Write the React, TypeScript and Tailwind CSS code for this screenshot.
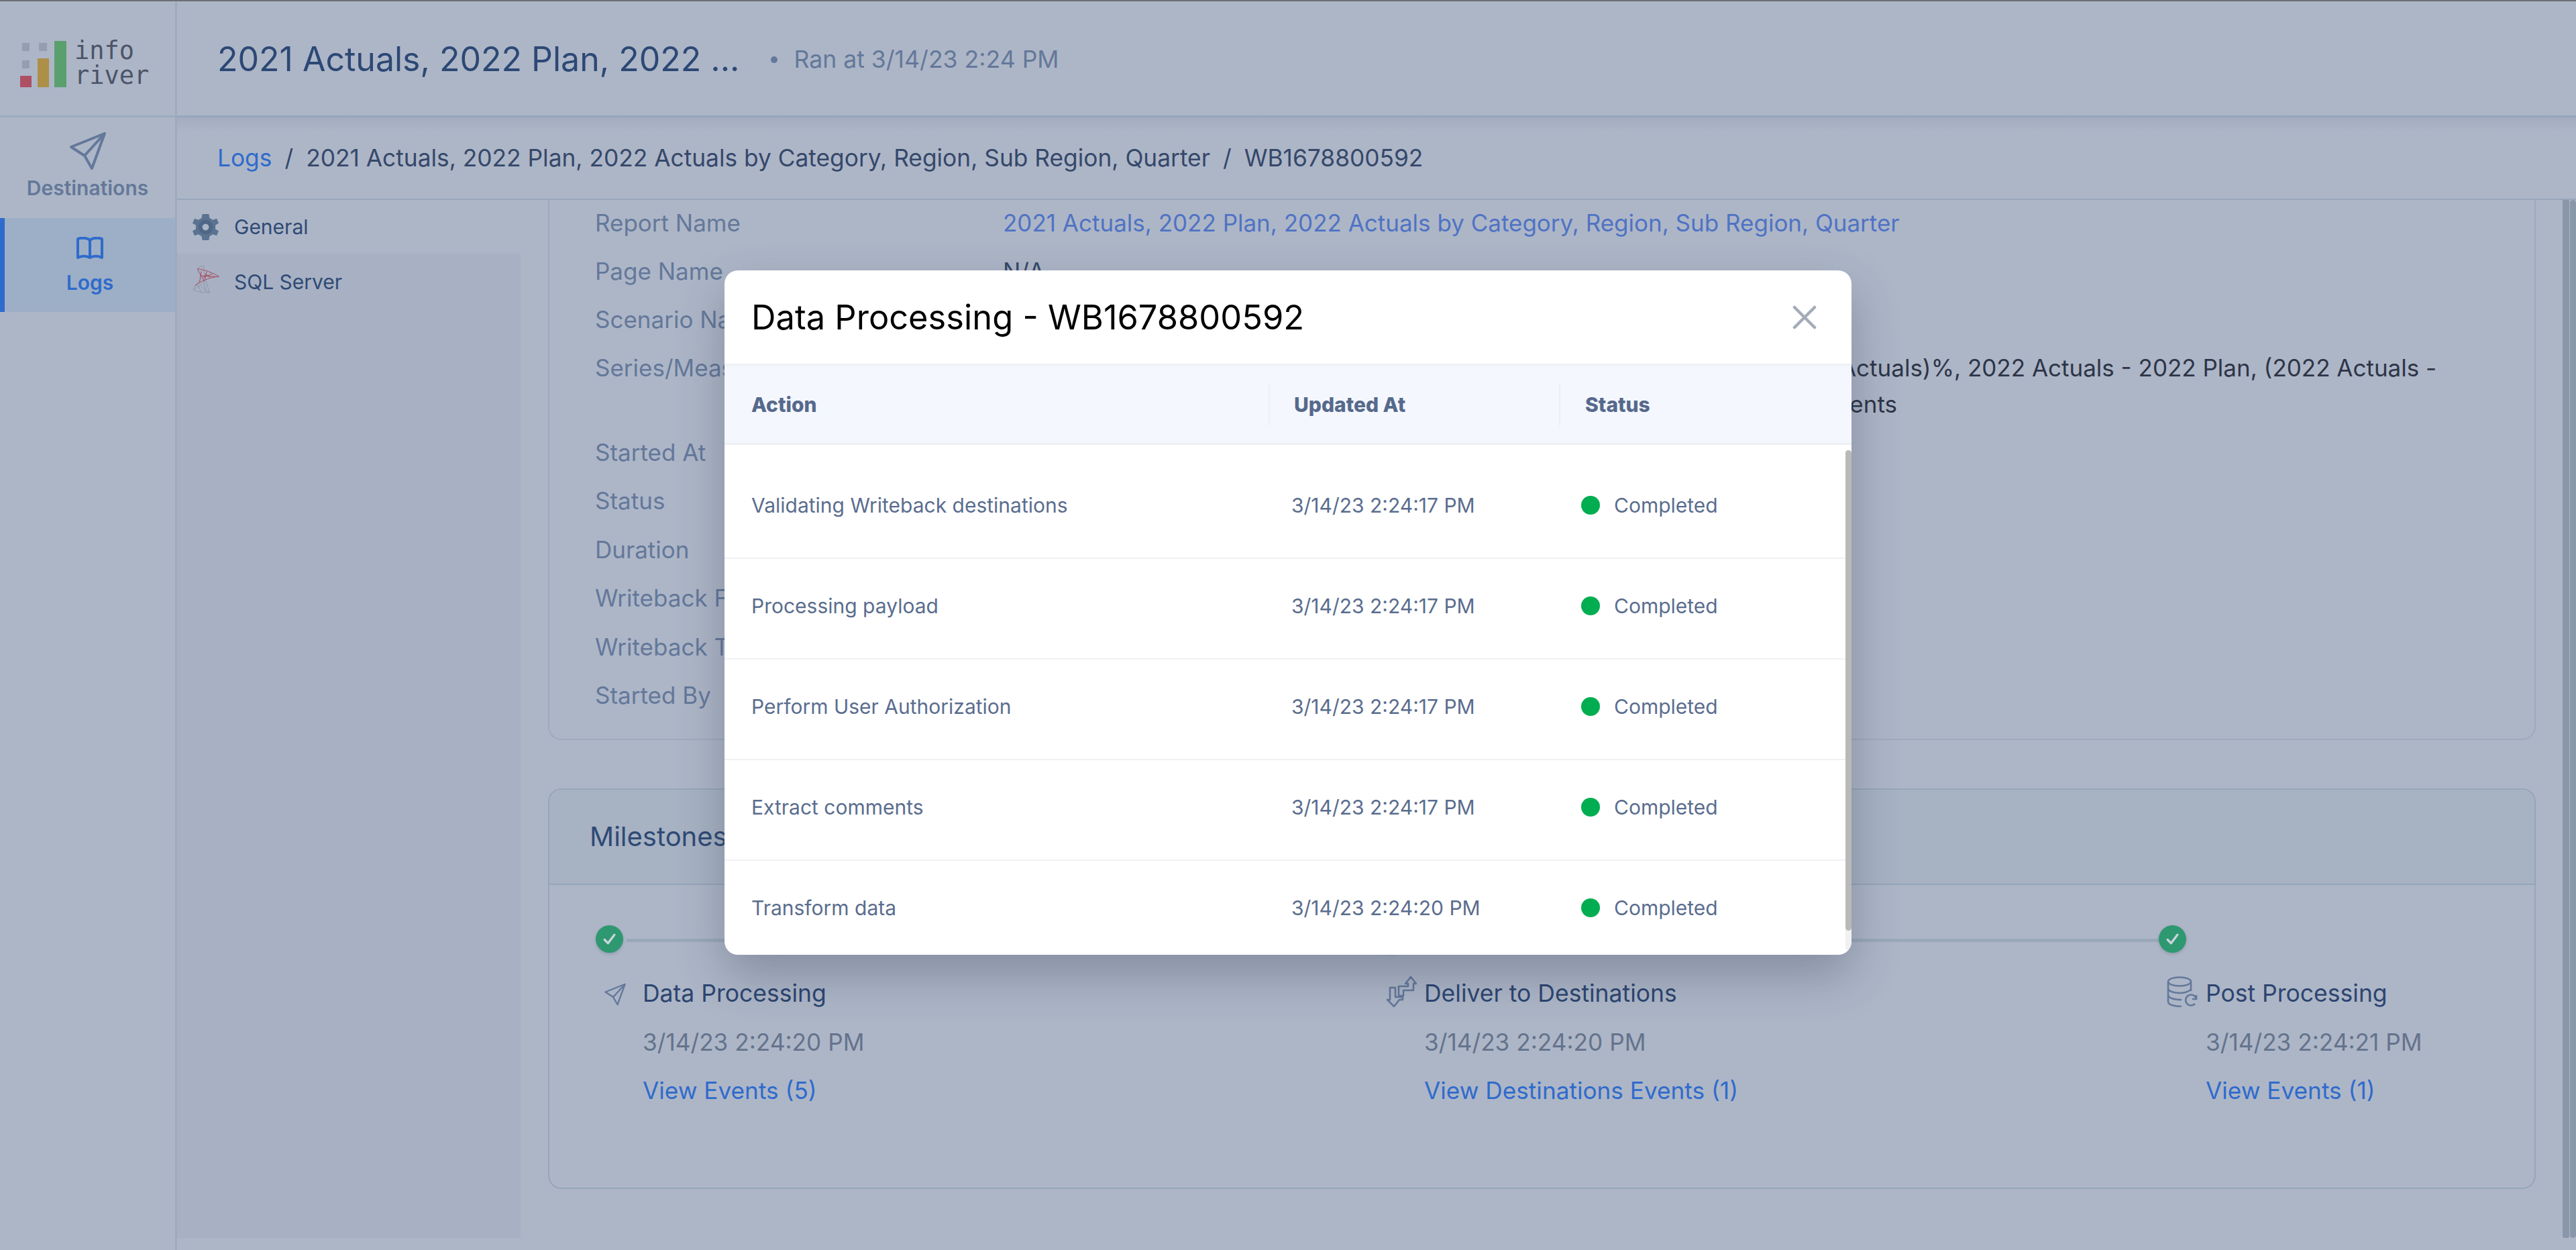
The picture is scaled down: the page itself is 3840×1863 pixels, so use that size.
import React from 'react';

const rows = [
  { action: 'Validating Writeback destinations', time: '3/14/23 2:24:17 PM' },
  { action: 'Processing payload', time: '3/14/23 2:24:17 PM' },
  { action: 'Perform User Authorization', time: '3/14/23 2:24:17 PM' },
  { action: 'Extract comments', time: '3/14/23 2:24:17 PM' },
  { action: 'Transform data', time: '3/14/23 2:24:20 PM' },
];

const detailsAfter = ['Started At', 'Status', 'Duration', 'Writeback From', 'Writeback To', 'Started By'];

const PlaneIcon = ({ className }: { className: string }) => (
  <svg viewBox="0 0 56 58" fill="none" stroke="currentColor" strokeWidth="4" strokeLinejoin="round" className={className}>
    <path d="M53 3 L3 23 L23 36 L34 55 Z" />
    <path d="M53 3 L23 36" />
  </svg>
);

const BookIcon = () => (
  <svg viewBox="0 0 42 34" fill="none" stroke="currentColor" strokeWidth="4" strokeLinejoin="round" className="w-[42px] h-[34px]">
    <path d="M21 5 C17 1 8 1 3 3 V31 C8 28 16 28 21 31 C26 28 34 28 39 31 V3 C34 1 25 1 21 5 Z" />
    <path d="M21 5 V31" />
  </svg>
);

const GearIcon = () => (
  <svg viewBox="0 0 40 40" className="w-[39px] h-[39px]">
    <path
      fill="#5a7391"
      d="M15 0 H25 L26 6 L31 9 L37 7 L40 14 L35 17 V23 L40 26 L37 33 L31 31 L26 34 L25 40 H15 L14 34 L9 31 L3 33 L0 26 L5 23 V17 L0 14 L3 7 L9 9 L14 6 Z"
    />
    <circle cx="20" cy="20" r="11" fill="#4f6786" />
    <circle cx="20" cy="20" r="5" fill="#adb6c7" />
  </svg>
);

const SqlIcon = () => (
  <svg viewBox="80 290 125 130" fill="none" className="w-[41px] h-[43px]">
    <g stroke="#8d93a0" strokeWidth="2.5">
      <path d="M130 292 C132 330 145 380 158 415 C130 415 100 412 83 402 C88 385 110 360 128 345" />
      <path d="M105 300 L130 292 M120 388 L158 415 M100 372 L120 412 M130 360 L140 413 M83 402 L125 375" />
    </g>
    <g stroke="#a9475c" strokeWidth="3">
      <path d="M102 306 C130 310 175 325 200 342 C160 345 120 360 90 385" />
      <path d="M102 306 C112 330 125 345 135 365 M120 318 L112 368 M145 320 L135 355 M170 330 L128 345 M115 338 L185 342 M135 330 L160 345" />
    </g>
  </svg>
);

const DeliverIcon = () => (
  <svg viewBox="0 0 46 46" fill="none" stroke="currentColor" strokeWidth="2.6" strokeLinejoin="round" className="w-[46px] h-[46px]">
    <path d="M37 1 L45 11 H41 V21 H26 V29 H19 V15 H33 V11 H29 Z" />
    <path d="M12 45 L2 35 H6 V17 H14 V31 H25 V35 H20 Z" />
  </svg>
);

const DatabaseIcon = () => (
  <svg viewBox="0 0 46 46" fill="none" stroke="currentColor" strokeWidth="2.6" className="w-[46px] h-[46px]">
    <ellipse cx="19" cy="8" rx="17" ry="6.5" />
    <path d="M2 8 V38 C2 42 10 45 22 45" />
    <path d="M36 8 V22" />
    <path d="M2 18 C2 22 10 25 19 25 C26 25 32 23 36 20" />
    <path d="M2 28 C2 32 10 35 22 35" />
    <path d="M44 34 A8 8 0 1 0 42 41" />
    <path d="M44 28 V34 H38" />
  </svg>
);

const CheckDot = () => (
  <div className="w-[41px] h-[41px] shrink-0 rounded-full bg-[#2e9870] shadow-[0_2px_4px_rgba(60,70,90,0.25)] flex items-center justify-center">
    <svg viewBox="0 0 20 20" fill="none" stroke="#c9d4da" strokeWidth="3.2" strokeLinecap="round" strokeLinejoin="round" className="w-[21px] h-[21px]">
      <path d="M3 11 L8 16 L17 4" />
    </svg>
  </div>
);

const Milestone = ({ icon, iconClass, title, date, link, line }: { icon: React.ReactNode; iconClass: string; title: string; date: string; link: string; line: boolean }) => (
  <div className={line ? 'w-[1165px] shrink-0' : 'flex-1'}>
    <div className="flex items-center h-[41px]">
      <CheckDot />
      {line && <div className="flex-1 h-[5px] bg-[#9ba8ba] ml-[5px] mt-[4px]" />}
    </div>
    <div className="relative pl-[70px] pt-[34px]">
      <div className={`absolute text-[#64789a] ${iconClass}`}>{icon}</div>
      <div className="h-[54px] leading-[54px] text-[35.5px] text-[#2c4570]">{title}</div>
      <div className="mt-[18px] h-[54px] leading-[54px] text-[#64738c]">{date}</div>
      <div className="mt-[18px] h-[54px] leading-[54px] text-[#2f6bcc]">{link}</div>
    </div>
  </div>
);

export default function App() {
  return (
    <div className="relative h-screen w-full overflow-hidden border-t-2 border-[#6b6e74] bg-[#adb6c7] font-[Inter,sans-serif] text-[35.2px] flex">
      <aside className="w-[264px] shrink-0 border-r-[3px] border-[#9dabbe] flex flex-col">
        <div className="h-[173px] border-b-[3px] border-[#9dabbe] relative shrink-0">
          <svg viewBox="0 0 70 70" className="absolute left-[30px] top-[59px] w-[70px] h-[70px]">
            <rect x="3" y="3" width="11" height="12" fill="#949eb0" />
            <rect x="28" y="3" width="12" height="12" fill="#949eb0" />
            <rect x="3" y="29" width="11" height="12" fill="#949eb0" />
            <rect x="0" y="52" width="17" height="17" fill="#ad5064" />
            <rect x="26" y="26" width="17" height="43" fill="#ad8f47" />
            <rect x="51" y="0" width="18" height="69" fill="#5aa06f" />
          </svg>
          <div className="absolute left-[111px] top-[55px] font-['DejaVu_Sans_Mono',monospace] text-[37px] leading-[37px] text-[#4b5568]">
            info
            <br />
            river
          </div>
        </div>
        <div className="h-[150px] flex flex-col items-center pt-[21px] text-[#64789a] shrink-0">
          <PlaneIcon className="w-[56px] h-[58px]" />
          <span className="text-[30px] font-semibold mt-[6px] leading-[40px]">Destinations</span>
        </div>
        <div className="h-[140px] border-l-[7px] border-[#2f6bcc] bg-[#9dafc6] flex flex-col items-center pt-[28px] text-[#2f6bcc] shrink-0">
          <BookIcon />
          <span className="text-[30px] font-semibold mt-[14px] leading-[40px]">Logs</span>
        </div>
      </aside>

      <main className="flex-1 min-w-0 flex flex-col">
        <header className="h-[173px] shrink-0 border-b-[3px] border-[#97a5ba] pl-[60px] pt-[3px] flex items-center">
          <span className="text-[50px] text-[#2c4875]">2021 Actuals, 2022 Plan, 2022 ...</span>
          <span className="ml-[47px] w-[10px] h-[10px] rounded-full bg-[#64789a]" />
          <span className="ml-[24px] text-[35.6px] text-[#64789a]">Ran at 3/14/23 2:24 PM</span>
        </header>
        <div className="h-[123px] shrink-0 border-b-2 border-[#97a5ba] pl-[60px] pt-[2px] flex items-center text-[35.3px] text-[#35486a] bg-gradient-to-b from-[#a3adbf] to-[#adb6c7] to-[18%]">
          <span className="text-[#2f6bcc]">Logs</span>
          <span className="mx-[19px]">/</span>
          <span>2021 Actuals, 2022 Plan, 2022 Actuals by Category, Region, Sub Region, Quarter</span>
          <span className="mx-[19px]">/</span>
          <span>WB1678800592</span>
        </div>

        <div className="flex-1 min-h-0 flex">
          <nav className="w-[512px] shrink-0 flex flex-col mb-[18px] text-[30px] text-[#2f4a75]">
            <div className="h-[80px] shrink-0 flex items-center pl-[23px] pt-[1px] gap-[23px]">
              <GearIcon />
              <span>General</span>
            </div>
            <div className="flex-1 bg-[#a7b1c3] pl-[23px] gap-[21px] flex items-start pt-[17px]">
              <SqlIcon />
              <span className="leading-[48px] mt-[1px]">SQL Server</span>
            </div>
          </nav>

          <div className="flex-1 min-w-0 relative overflow-hidden pr-[60px] pl-[41px]">
            <section className="rounded-b-[20px] border-2 border-t-0 border-[#9dabbe] pl-[68px] pr-[60px] pb-[29px] text-[35px] text-[#64789a] -mt-[2px]">
              <div className="flex h-[72px] items-center">
                <span className="w-[608px] shrink-0">Report Name</span>
                <span className="text-[#4f73c4]">2021 Actuals, 2022 Plan, 2022 Actuals by Category, Region, Sub Region, Quarter</span>
              </div>
              <div className="flex h-[72px] items-center">
                <span className="w-[608px] shrink-0">Page Name</span>
                <span className="text-[#35486a]">N/A</span>
              </div>
              <div className="flex h-[72px] items-center">
                <span className="w-[608px] shrink-0">Scenario Name</span>
              </div>
              <div className="flex py-[9px]">
                <span className="w-[608px] shrink-0 leading-[54px]">Series/Measures</span>
                <span className="leading-[54px] text-[#2d3547] whitespace-nowrap">
                  2021 Actuals, 2022 Forecasts, 2022 Plan - 2021 Actuals, (2022 Plan - 2021 Actuals)%, 2022 Actuals - 2022 Plan, (2022 Actuals -
                  <br />
                  2022 Plan)%, 2021 Actuals - 2022 Plan, (2022 Actuals - 2022 Plans), Comments
                </span>
              </div>
              {detailsAfter.map((label) => (
                <div key={label} className="flex h-[72.4px] items-center">
                  <span>{label}</span>
                </div>
              ))}
            </section>

            <section className="mt-[72px] rounded-[20px] border-2 border-[#97a5ba] h-[597px] overflow-hidden">
              <div className="h-[142px] bg-[#a7b2c3] border-b-2 border-[#97a5ba] pl-[60px] flex items-center text-[40px] text-[#2f4a75]">Milestones</div>
              <div className="flex pl-[69px] pt-[60px]">
                <Milestone line icon={<PlaneIcon className="w-[34px] h-[34px]" />} iconClass="left-[12px] top-[45px]" title="Data Processing" date="3/14/23 2:24:20 PM" link="View Events (5)" />
                <Milestone line icon={<DeliverIcon />} iconClass="left-[13px] top-[35px]" title="Deliver to Destinations" date="3/14/23 2:24:20 PM" link="View Destinations Events (1)" />
                <Milestone line={false} icon={<DatabaseIcon />} iconClass="left-[12px] top-[35px]" title="Post Processing" date="3/14/23 2:24:21 PM" link="View Events (1)" />
              </div>
            </section>

            <div className="absolute right-0 top-0 bottom-[18px] w-[20px] flex gap-[1px]">
              <div className="w-[10px] bg-[#8a96aa] rounded-b-[3px]" />
              <div className="w-[9px] bg-[#8a96aa] rounded-[5px]" />
            </div>
          </div>
        </div>
      </main>

      <div className="absolute left-[1080px] top-[401px] w-[1680px] h-[1020px] rounded-[20px] bg-white overflow-hidden flex flex-col shadow-[0_30px_70px_rgba(40,50,70,0.3)]">
        <div className="h-[142px] shrink-0 border-b-[3px] border-[#eef0f3] pl-[40px] pr-[52px] flex items-center justify-between">
          <span className="text-[50.6px] text-black">Data Processing - WB1678800592</span>
          <svg viewBox="0 0 36 36" fill="none" stroke="#a4abb8" strokeWidth="4.5" strokeLinecap="round" className="w-[36px] h-[36px]">
            <path d="M3 3 L33 33 M33 3 L3 33" />
          </svg>
        </div>
        <div className="h-[118px] shrink-0 border-b-[3px] border-[#eef0f3] bg-[#f4f7fd] pl-[40px] pt-[2px] flex items-center text-[30px] font-extrabold text-[#56698c]">
          <span className="w-[771px] shrink-0">Action</span>
          <div className="w-[433px] shrink-0 h-[60px] border-l-2 border-[#eceef2] pl-[36px] flex items-center">Updated At</div>
          <div className="h-[60px] border-l-2 border-[#eceef2] pl-[37px] flex items-center">Status</div>
        </div>
        <div className="relative flex-1 min-h-0 overflow-hidden pt-[20px] text-[30px] text-[#5a6d8e]">
          {rows.map((row) => (
            <div key={row.action} className="h-[150px] shrink-0 border-b-2 border-[#eff1f4] pb-[8px] pl-[40px] flex items-center">
              <span className="w-[805px] shrink-0">{row.action}</span>
              <span className="w-[432px] shrink-0">{row.time}</span>
              <span className="w-[28px] h-[28px] rounded-full bg-[#00ad50]" />
              <span className="ml-[21px]">Completed</span>
            </div>
          ))}
          <div className="absolute right-0 top-[8px] bottom-[6px] w-[9px] bg-[#f1f1f1] rounded-[5px]">
            <div className="h-[96%] bg-[#b9b9b9] rounded-[5px]" />
          </div>
        </div>
      </div>
    </div>
  );
}
